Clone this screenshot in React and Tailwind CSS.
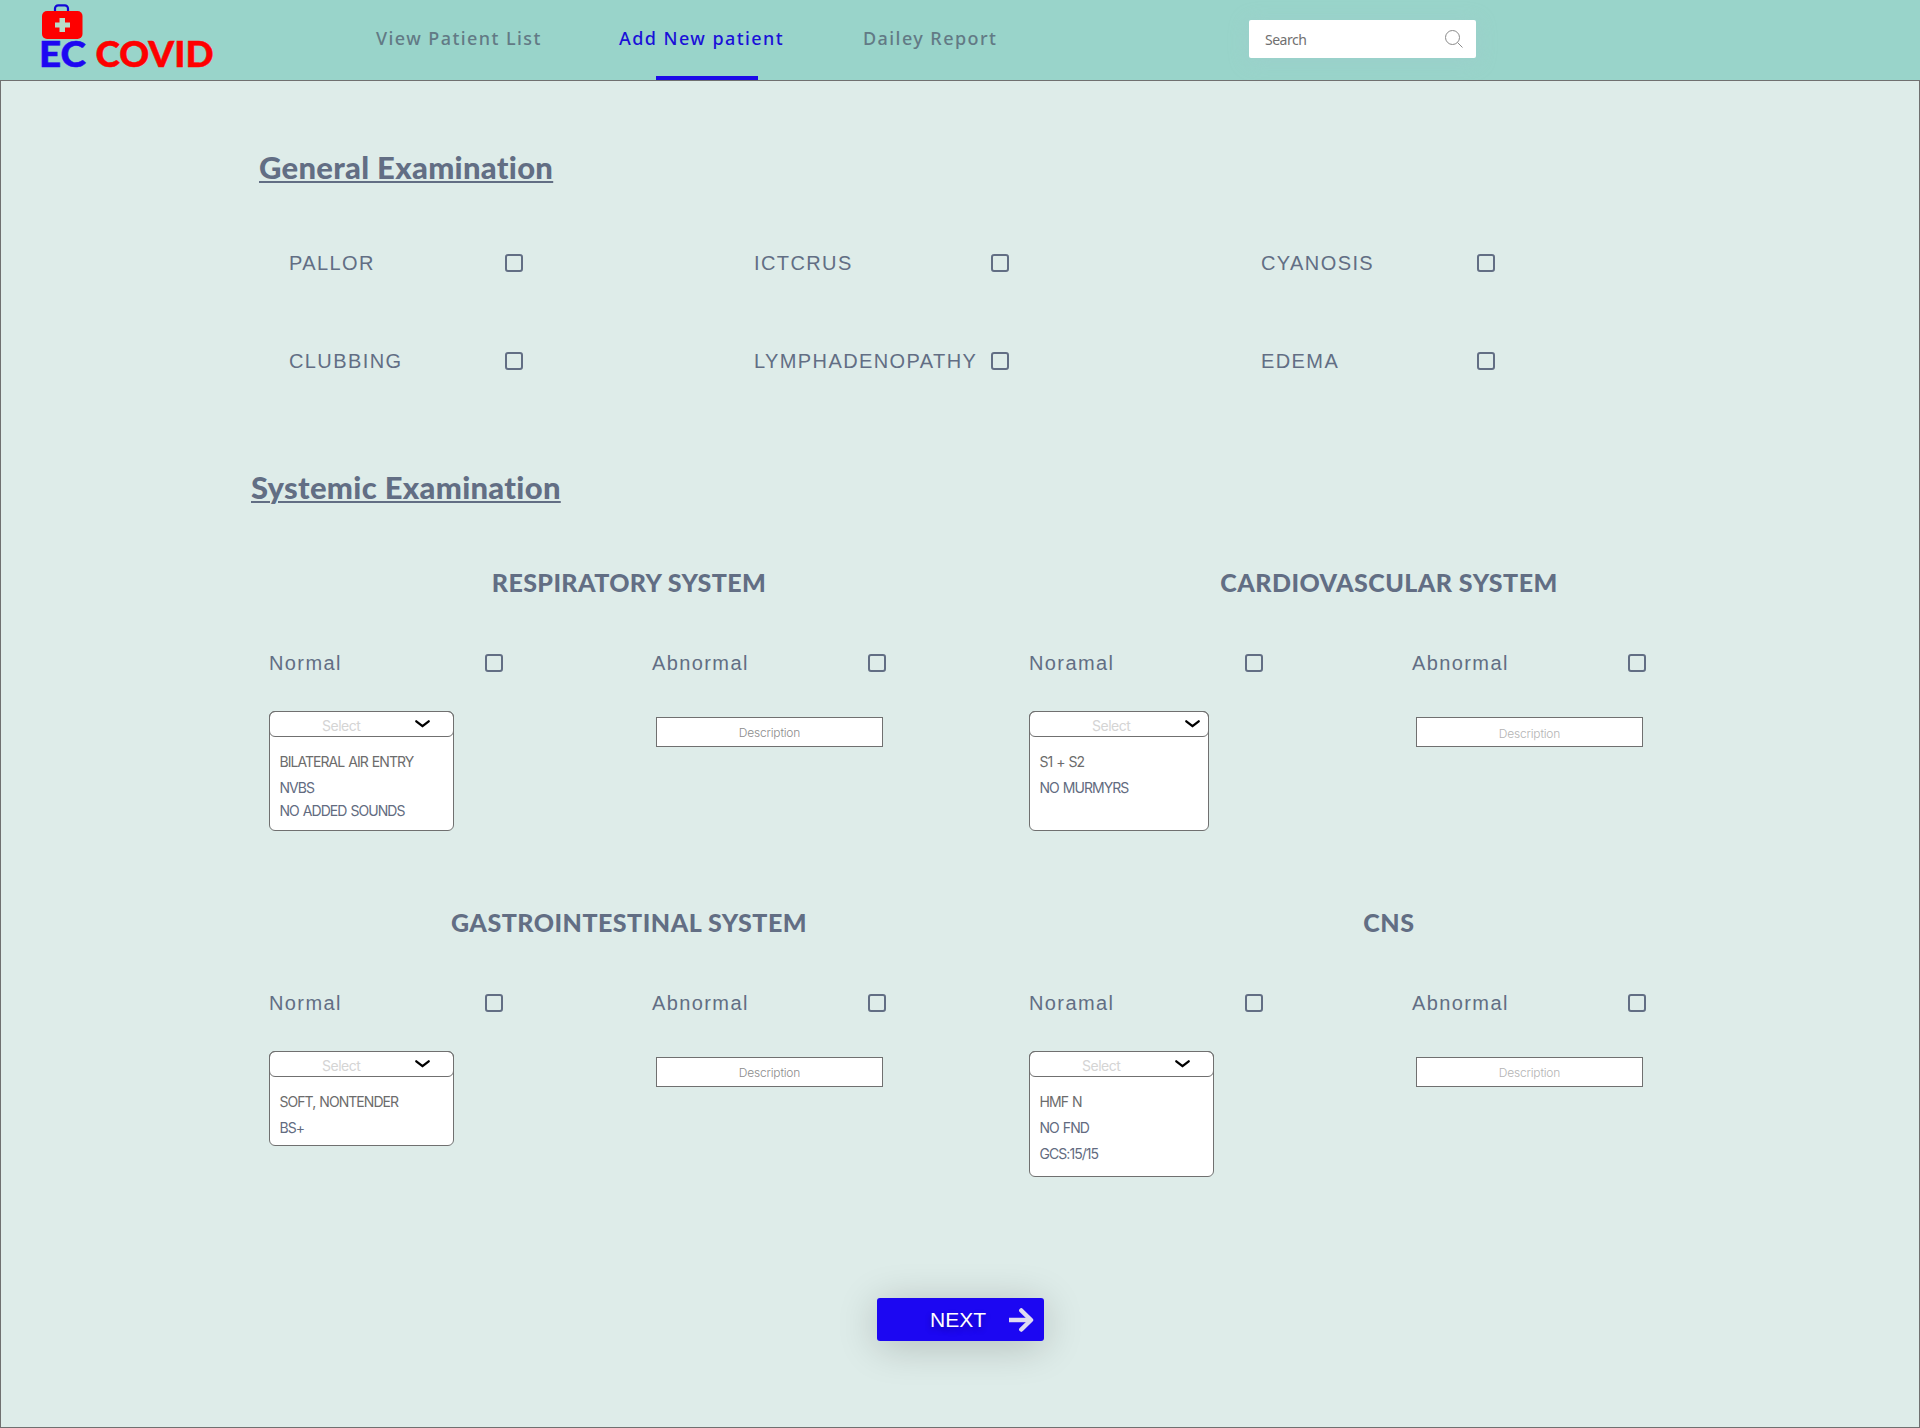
const INK = 'text-[#626e84]';

function BrandLogo() {
  return (
    <svg width="180" height="80" viewBox="0 0 180 80" className="shrink-0 overflow-visible" aria-label="EC COVID">
      <path d="M15 12V8.500a3.200 3.200 0 0 1 3.200-3.200h6.600a3.200 3.200 0 0 1 3.200 3.200V12" fill="none" stroke="#1208d6" strokeWidth="2.200" />
      <rect x="2" y="11" width="40.500" height="28" rx="5" fill="#fe0000" />
      <path d="M19.500 18h5.500v4.500h5v5h-5v4.500h-5.500v-4.500h-4.500v-5h4.500z" fill="#b8dcc9" />
      <g fontFamily="Lato" fontWeight="900" fontSize="36.500" strokeWidth="0.500">
        <text x="-1" y="66.600" textLength="47" lengthAdjust="spacingAndGlyphs" fill="#1d07f2" stroke="#1d07f2">EC</text>
        <text x="55.500" y="66.600" textLength="118" lengthAdjust="spacingAndGlyphs" fill="#fe0000" stroke="#fe0000">COVID</text>
      </g>
    </svg>
  );
}

function Header() {
  return (
    <header className="flex h-20 bg-[#99d4ca] pl-10">
      <BrandLogo />
      <nav className="ml-[156px] flex h-20 font-['Noto_Sans'] text-[18px] leading-[24px] font-medium tracking-[1.43px] text-[#627a85]">
        <a className="mt-[26px] w-[243px] whitespace-nowrap">View Patient List</a>
        <div className="flex w-[244px] flex-col text-[#1a10d8]">
          <a className="mt-[26px] whitespace-nowrap">Add New patient</a>
          <span className="mt-[26px] ml-[37px] h-1 w-[102px] bg-[#1b0be8]" />
        </div>
        <a className="mt-[26px] w-[140px] whitespace-nowrap">Dailey Report</a>
      </nav>
      <div className="mt-5 ml-[246px] flex h-[38px] w-[227px] items-center justify-between rounded-[2px] bg-white pr-[13px] pl-4 shadow-[0_3px_20px_rgba(160,200,205,0.4)]">
        <span className="font-['Noto_Sans'] text-[14px] tracking-[-0.5px] text-[#707070]">Search</span>
        <svg width="18" height="18" viewBox="0 0 18 18" fill="none" stroke="#8a8a8a" strokeWidth="1">
          <circle cx="7.500" cy="7.500" r="7" />
          <path d="M12.500 12.500l5 5" />
        </svg>
      </div>
    </header>
  );
}

function CheckField({ label, width = 'w-[234px]' }) {
  return (
    <label className={`flex h-[18px] items-center justify-between ${width}`}>
      <span className={`font-['Liberation_Sans'] text-[20px] leading-[18px] tracking-[1.4px] whitespace-nowrap ${INK}`}>{label}</span>
      <span className="size-[18px] shrink-0 rounded-[3px] border-2 border-[#626e84]" />
    </label>
  );
}

function Chevron() {
  return (
    <svg width="15" height="8" viewBox="0 0 15 8" fill="none" stroke="#000" strokeWidth="2.300" strokeLinecap="round" strokeLinejoin="round">
      <path d="M1.300 1.300L7.500 6.200L13.700 1.300" />
    </svg>
  );
}

function SelectBox({ options, width, height, selectPad, chevronPad }) {
  return (
    <div className={`rounded-[6px] border border-[#707070] bg-white ${width} ${height}`}>
      <div className={`-mx-px -mt-px flex h-[26px] items-center justify-between rounded-[6px] border border-[#707070] ${selectPad} ${chevronPad}`}>
        <span className="mt-1 font-['Inter'] text-[14px] leading-5 font-normal tracking-[-0.5px] text-[#d4d4d4]">Select</span>
        <Chevron />
      </div>
      <ul className="mt-[15px] pl-[9.5px] font-['Inter'] text-[14px] leading-[20px] font-normal tracking-[-0.95px] whitespace-nowrap [word-spacing:1px]">
        {options.map((o) => (
          <li key={o.text} className={`${o.color} ${o.height}`}>{o.text}</li>
        ))}
      </ul>
    </div>
  );
}

function SystemPanel({ system }) {
  return (
    <section className="h-[340px] w-[720px]">
      <h3 className={`text-center font-['Lato'] text-[25px] leading-[30px] font-black ${INK} ${system.tracking}`}>{system.title}</h3>
      <div className="mt-[57px] flex gap-[149px]">
        <CheckField label={system.normal} />
        <CheckField label="Abnormal" />
      </div>
      <div className="mt-[39px] flex">
        <div className="w-[387px]">
          <SelectBox {...system} />
        </div>
        <div className={`mt-[6px] flex h-[30px] w-[227px] justify-center border border-[#707070] bg-white font-['Inter'] text-[12px] leading-[16px] font-light tracking-[-0.2px] ${system.descClass}`}>
          Description
        </div>
      </div>
    </section>
  );
}

const GRAY = 'text-[#6c6c6c]';
const SLATE = 'text-[#626b80]';

const systems = [
  {
    title: 'RESPIRATORY SYSTEM', normal: 'Normal', tracking: 'tracking-[0.4px]',
    width: 'w-[185px]', height: 'h-[120px]', selectPad: 'pl-[52px]', chevronPad: 'pr-[23px]', descClass: 'pt-[7px] text-[#8c8c8c]',
    options: [
      { text: 'BILATERAL AIR ENTRY', color: GRAY, height: 'h-[26px]' },
      { text: 'NVBS', color: SLATE, height: 'h-[23px]' },
      { text: 'NO ADDED SOUNDS', color: SLATE, height: 'h-[20px]' },
    ],
  },
  {
    title: 'CARDIOVASCULAR SYSTEM', normal: 'Noramal', tracking: 'tracking-[0.45px]',
    width: 'w-[180px]', height: 'h-[120px]', selectPad: 'pl-[62px]', chevronPad: 'pr-[8px]', descClass: 'pt-[8px] text-[#b4b4b4]',
    options: [
      { text: 'S1 + S2', color: GRAY, height: 'h-[26px]' },
      { text: 'NO MURMYRS', color: SLATE, height: 'h-[26px]' },
    ],
  },
  {
    title: 'GASTROINTESTINAL SYSTEM', normal: 'Normal', tracking: 'tracking-[0.5px]',
    width: 'w-[185px]', height: 'h-[95px]', selectPad: 'pl-[52px]', chevronPad: 'pr-[23px]', descClass: 'pt-[7px] text-[#8c8c8c]',
    options: [
      { text: 'SOFT, NONTENDER', color: GRAY, height: 'h-[26px]' },
      { text: 'BS+', color: SLATE, height: 'h-[26px]' },
    ],
  },
  {
    title: 'CNS', normal: 'Noramal', tracking: 'tracking-[0.6px]',
    width: 'w-[185px]', height: 'h-[126px]', selectPad: 'pl-[52px]', chevronPad: 'pr-[23px]', descClass: 'pt-[7px] text-[#b4b4b4]',
    options: [
      { text: 'HMF N', color: GRAY, height: 'h-[26px]' },
      { text: 'NO FND', color: SLATE, height: 'h-[26px]' },
      { text: 'GCS:15/15', color: SLATE, height: 'h-[26px]' },
    ],
  },
];

function SectionTitle({ children, className }) {
  return (
    <h2 className={`flex font-['Lato'] text-[31px] leading-[36px] font-black tracking-[0.3px] underline decoration-2 underline-offset-[2px] ${INK} ${className}`}>
      {children}
    </h2>
  );
}

export default function App() {
  return (
    <div className="flex h-[1428px] w-[1920px] flex-col overflow-hidden bg-[#deece9]">
      <Header />
      <main className="flex-1 border border-[#707070]">
        <SectionTitle className="mt-[68px] ml-[258px]">General Examination</SectionTitle>
        <div className="mt-[69px] ml-[288px] grid grid-cols-[465px_507px_234px] gap-y-20">
          <CheckField label="PALLOR" />
          <CheckField label="ICTCRUS" width="w-[255px]" />
          <CheckField label="CYANOSIS" />
          <CheckField label="CLUBBING" />
          <CheckField label="LYMPHADENOPATHY" width="w-[255px]" />
          <CheckField label="EDEMA" />
        </div>
        <SectionTitle className="mt-[99px] ml-[250px]">Systemic Examination</SectionTitle>
        <div className="mt-[62px] ml-[268px] grid grid-cols-[760px_720px]">
          {systems.map((s) => (
            <SystemPanel key={s.title} system={s} />
          ))}
        </div>
        <button className="mt-[51px] ml-[876px] flex h-[43px] w-[167px] items-center rounded-[3px] bg-[#1c07f2] pl-[53px] shadow-[0_5px_40px_rgba(0,0,0,0.2)]">
          <span className="w-[78px] text-left font-['Liberation_Sans'] text-[21px] leading-[24px] text-white [text-shadow:0_3px_6px_rgba(0,0,0,0.3)]">NEXT</span>
          <svg width="26" height="24" viewBox="0 0 26 24" fill="none" stroke="#dfdaf0" strokeWidth="4.500" strokeLinejoin="round">
            <path d="M1 12h20" />
            <path d="M13.300 2.500L23 12l-9.700 9.500" strokeLinecap="round" />
          </svg>
        </button>
      </main>
    </div>
  );
}
